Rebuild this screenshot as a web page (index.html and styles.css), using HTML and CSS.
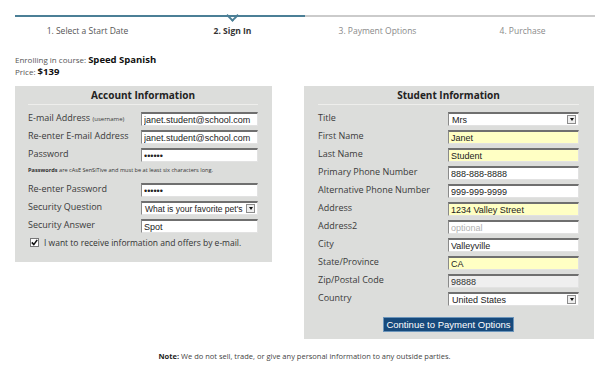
FILE: index.html
```html
<!DOCTYPE html>
<html lang="en">
  <head>
    <meta charset="UTF-8" />
    <meta name="viewport" content="width=device-width, initial-scale=1.0" />
    <title>Sign In</title>
    <link rel="stylesheet" href="styles.css">
  </head>
  <body>
    <div class="steps">
      <div class="step done">1. Select a Start Date</div>
      <div class="step done current">2. Sign In</div>
      <div class="step">3. Payment Options</div>
      <div class="step">4. Purchase</div>
    </div>

    <div class="course">
      <div>Enrolling in course: <b>Speed Spanish</b></div>
      <div>Price: <b>$139</b></div>
    </div>

    <div class="panels">
      <!-- 账号信息 -->
      <div class="panel account">
        <h2>Account Information</h2>
        <div class="form">
          <label>E-mail Address <small>(username)</small></label>
          <input type="text" value="janet.student@school.com" />
          <label>Re-enter E-mail Address</label>
          <input type="text" value="janet.student@school.com" />
          <label>Password</label>
          <input type="password" value="secret" />
          <p class="hint"><b>Passwords</b> are cAsE SenSiTive and must be at least six characters long.</p>
          <label>Re-enter Password</label>
          <input type="password" value="secret" />
          <label>Security Question</label>
          <div class="select big">
            <span class="text">What is your favorite pet's</span>
            <span class="arrow"></span>
          </div>
          <label>Security Answer</label>
          <input type="text" value="Spot" />
          <div class="check">
            <span class="box">
              <svg width="7" height="7" viewBox="0 0 7 7"><path d="M0.8 3.4 L2.8 5.6 L6.2 0.9" fill="none" stroke="#111" stroke-width="1.6" /></svg>
            </span>
            I want to receive information and offers by e-mail.
          </div>
        </div>
      </div>

      <!-- 学生信息 -->
      <div class="panel student">
        <h2>Student Information</h2>
        <div class="form">
          <label>Title</label>
          <div class="select">
            <span class="text">Mrs</span>
            <span class="arrow"></span>
          </div>
          <label>First Name</label>
          <input class="req" type="text" value="Janet" />
          <label>Last Name</label>
          <input class="req" type="text" value="Student" />
          <label>Primary Phone Number</label>
          <input type="text" value="888-888-8888" />
          <label>Alternative Phone Number</label>
          <input type="text" value="999-999-9999" />
          <label>Address</label>
          <input class="req" type="text" value="1234 Valley Street" />
          <label>Address2</label>
          <input type="text" placeholder="optional" />
          <label>City</label>
          <input type="text" value="Valleyville" />
          <label>State/Province</label>
          <input class="req" type="text" value="CA" />
          <label>Zip/Postal Code</label>
          <input class="off" type="text" value="98888" />
          <label>Country</label>
          <div class="select">
            <span class="text">United States</span>
            <span class="arrow"></span>
          </div>
        </div>
        <button class="go">Continue to Payment Options</button>
      </div>
    </div>

    <p class="note"><b>Note:</b> We do not sell, trade, or give any personal information to any outside parties.</p>
  </body>
</html>
```

FILE: styles.css
```css
body {
  margin: 0;
  padding: 15px 11px 0 15px;
  font-family: "Open Sans", "DejaVu Sans", sans-serif;
  color: #333;
  background: #fff;
}
/* 步骤条 */
.steps {
  display: flex;
  width: 580px;
}
.step {
  flex: 1;
  border-top: 2px solid #cbcbcb;
  padding-top: 8px;
  line-height: 12px;
  font-size: 8.5px;
  text-align: center;
  color: #8a8a8a;
}
.step.done {
  border-color: #4b7f96;
  color: #555;
}
.step.current {
  position: relative;
  font-weight: bold;
  color: #333;
}
.step.current::before {
  content: "";
  position: absolute;
  top: -6px;
  left: 68px;
  width: 7px;
  height: 7px;
  border-right: 2px solid #4b7f96;
  border-bottom: 2px solid #4b7f96;
  transform: rotate(45deg);
}
.course {
  margin-top: 17px;
  font-size: 8px;
  line-height: 12px;
  color: #555;
}
.course b {
  font-size: 9.5px;
  color: #111;
}
/* 两个面板 */
.panels {
  display: flex;
  align-items: flex-start;
  gap: 32px;
  margin-top: 8px;
}
.panel {
  background-color: #dcdddb;
}
.account {
  width: 230px;
  padding: 2px 14px 14px 13px;
}
.student {
  width: 261px;
  padding: 2px 15px 7px 14px;
}
h2 {
  margin: 0 0 7px;
  padding-bottom: 2px;
  border-bottom: 1px solid #eeeeec;
  font-size: 10px;
  line-height: 14px;
  text-align: center;
  color: #222;
}
.form {
  display: grid;
  grid-template-columns: 113px 117px;
  row-gap: 4px;
}
.student .form {
  grid-template-columns: 130px 131px;
}
label {
  font-size: 9px;
  line-height: 11px;
  color: #3a3a3a;
}
label small {
  font-size: 6px;
}
input,
.select {
  box-sizing: border-box;
  width: 100%;
  height: 14px;
  margin: 0;
  padding: 0 2px;
  border: 1px solid #e2e2e2;
  border-top: 2px solid #6f6f6f;
  border-left-color: #8a8a8a;
  background-color: white;
  font-family: "Liberation Sans", Arial, sans-serif;
  font-size: 9px;
  color: #222;
  outline: none;
}
input::placeholder {
  color: #b0b0b0;
}
input.req {
  background-color: #ffffc4;
}
input.off {
  background-color: #efefef;
  color: #333;
}
.select {
  display: flex;
  align-items: center;
  padding: 0 2px 0 3px;
}
.select .text {
  flex: 1;
  white-space: nowrap;
}
.select.big {
  font-size: 8.5px;
}
.arrow {
  width: 7px;
  height: 7px;
  border: 1px solid #8c8c8c;
  background-color: #eeeeee;
  display: flex;
  align-items: center;
  justify-content: center;
  margin-left: 2px;
}
.arrow::after {
  content: "";
  border-left: 2px solid transparent;
  border-right: 2px solid transparent;
  border-top: 3px solid #111;
}
.hint {
  grid-column: 1 / -1;
  margin: 0;
  padding-bottom: 4px;
  font-size: 5.6px;
  line-height: 9px;
  color: #333;
}
.check {
  grid-column: 1 / -1;
  display: flex;
  align-items: center;
  gap: 5px;
  padding-left: 2px;
  font-size: 8.5px;
  line-height: 11px;
  color: #333;
}
.box {
  width: 7px;
  height: 7px;
  border: 1px solid #777;
  background-color: white;
  display: flex;
  align-items: center;
  justify-content: center;
}
.go {
  display: block;
  width: 131px;
  height: 15px;
  margin: 11px auto 0;
  padding: 0;
  border: 1px solid #6c95bb;
  background-color: #174a7c;
  color: white;
  font-family: "Liberation Sans", Arial, sans-serif;
  font-size: 9.5px;
  line-height: 12px;
}
.note {
  margin: 12px 0 0;
  font-size: 7.5px;
  line-height: 10px;
  text-align: center;
  color: #444;
}
.note b {
  color: #222;
}
```
